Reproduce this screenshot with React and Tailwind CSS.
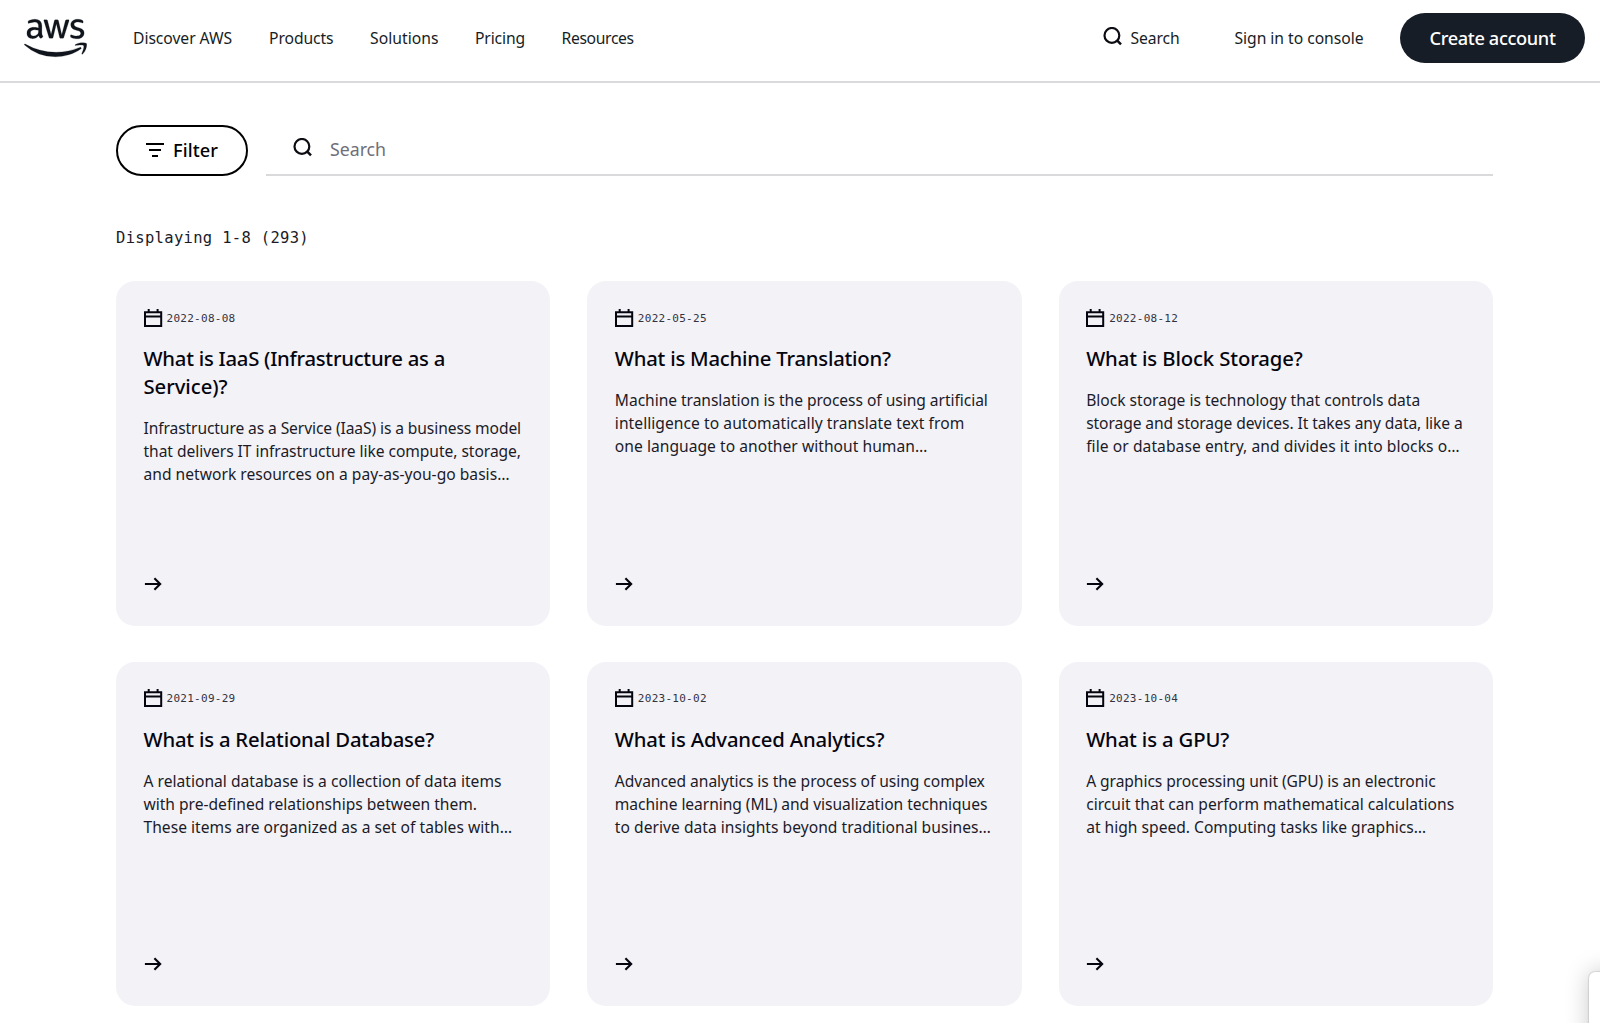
import { useLayoutEffect, useRef, useState } from "react";
import { FaAws } from "react-icons/fa6";

// A single line of text whose tracking is adjusted to fill a given width.
function Line({ text, width, className = "" }) {
  const ref = useRef(null);
  const [spacing, setSpacing] = useState(0);
  useLayoutEffect(() => {
    const natural = ref.current.getBoundingClientRect().width;
    setSpacing((width - natural) / text.length);
  }, [text, width]);
  return (
    <span className={`block w-max whitespace-nowrap ${className}`}>
      <span ref={ref} style={{ letterSpacing: `${spacing}px` }}>
        {text}
      </span>
    </span>
  );
}

function SearchIcon({ className = "" }) {
  return (
    <svg className={`h-[19px] w-[19px] ${className}`} viewBox="0 0 19 19" fill="none" stroke="#0c0c12" strokeWidth="2.2">
      <circle cx="8.9" cy="8.4" r="7.4" />
      <path d="M13.8 13.2 18 17.4" strokeWidth="2.5" />
    </svg>
  );
}

function FilterIcon() {
  return (
    <svg className="h-[18px] w-[18px]" viewBox="0 0 18 18" fill="none" stroke="#000" strokeWidth="2.1">
      <path d="M0 3h18M3 9h12M6 15h6" />
    </svg>
  );
}

function CalendarIcon() {
  return (
    <svg className="h-[19px] w-[19px]" viewBox="0 0 19 19" fill="none" stroke="#05050f" strokeWidth="2">
      <path d="M1 3.2h16.2v13.8H1zM1 7.6h16.2M4.7 0v3.4M13.6 0v3.4" />
    </svg>
  );
}

function ArrowIcon() {
  return (
    <svg className="h-[14px] w-[18px]" viewBox="0 0 18 14" fill="none" stroke="#05050f" strokeWidth="2.1">
      <path d="M.9 7h15.6M10.4 1.2 16.2 7l-5.8 5.8" />
    </svg>
  );
}

const nav = [
  ["Discover AWS", 99, "w-[136px]"],
  ["Products", 64.5, "w-[101px]"],
  ["Solutions", 68.5, "w-[105px]"],
  ["Pricing", 50, "w-[86.5px]"],
  ["Resources", 72.3, "w-[80px]"],
];

const cards = [
  {
    date: "2022-08-08",
    title: [["What is IaaS (Infrastructure as a", 301.5], ["Service)?", 84]],
    body: [
      ["Infrastructure as a Service (IaaS) is a business model", 377.5],
      ["that delivers IT infrastructure like compute, storage,", 377.5],
      ["and network resources on a pay-as-you-go basis…", 366],
    ],
  },
  {
    date: "2022-05-25",
    title: [["What is Machine Translation?", 276]],
    body: [
      ["Machine translation is the process of using artificial", 373],
      ["intelligence to automatically translate text from", 349.5],
      ["one language to another without human…", 312.5],
    ],
  },
  {
    date: "2022-08-12",
    title: [["What is Block Storage?", 216.5]],
    body: [
      ["Block storage is technology that controls data", 334],
      ["storage and storage devices. It takes any data, like a", 376.5],
      ["file or database entry, and divides it into blocks o…", 373.5],
    ],
  },
  {
    date: "2021-09-29",
    title: [["What is a Relational Database?", 290.5]],
    body: [
      ["A relational database is a collection of data items", 358],
      ["with pre-defined relationships between them.", 333.5],
      ["These items are organized as a set of tables with…", 368.5],
    ],
  },
  {
    date: "2023-10-02",
    title: [["What is Advanced Analytics?", 269.5]],
    body: [
      ["Advanced analytics is the process of using complex", 370],
      ["machine learning (ML) and visualization techniques", 372.5],
      ["to derive data insights beyond traditional busines…", 376],
    ],
  },
  {
    date: "2023-10-04",
    title: [["What is a GPU?", 143]],
    body: [
      ["A graphics processing unit (GPU) is an electronic", 349.5],
      ["circuit that can perform mathematical calculations", 368],
      ["at high speed. Computing tasks like graphics…", 340],
    ],
  },
];

function Card({ date, title, body }) {
  return (
    <article className="flex h-[344.5px] flex-col rounded-[19px] bg-[#f3f2f7] px-[27.5px] pt-[27.5px] pb-[35px]">
      <div className="flex h-[19px] items-center gap-[4px]">
        <CalendarIcon />
        <Line text={date} width={69} className="font-['DejaVu_Sans_Mono',monospace] text-[11px] leading-[19px] text-[#33333f]" />
      </div>
      <h2 className="mt-[17.6px] text-[20.3px] leading-[27.6px] font-medium text-[#05050f]">
        {title.map(([t, w]) => (
          <Line key={t} text={t} width={w} />
        ))}
      </h2>
      <p className="mt-[16.4px] text-[15.6px] leading-[23px] text-[#1b1b28]">
        {body.map(([t, w]) => (
          <Line key={t} text={t} width={w} />
        ))}
      </p>
      <div className="mt-auto">
        <ArrowIcon />
      </div>
    </article>
  );
}

export default function App() {
  return (
    <div className="h-[1023px] w-[1600px] overflow-hidden bg-white font-['Noto_Sans',sans-serif] text-[#161d26]">
      <header className="flex h-[83px] items-start border-b-2 border-[#dadadc] pr-[15px] pl-6">
        <FaAws className="mt-[13px] h-[50px] w-[63px] stroke-[#10141c] stroke-[2] text-[#10141c]" />
        <nav className="ml-[46px] flex pt-[26px] text-[15.7px] leading-[24px]">
          {nav.map(([t, w, box]) => (
            <a key={t} className={box}>
              <Line text={t} width={w} />
            </a>
          ))}
        </nav>
        <div className="ml-auto flex text-[15.7px] leading-[24px]">
          <div className="flex pt-[26px]">
            <SearchIcon className="mt-[0.5px]" />
            <Line text="Search" width={49} className="ml-[9px]" />
            <Line text="Sign in to console" width={129} className="ml-[55px]" />
          </div>
          <button className="mt-[12.5px] ml-[36.5px] flex h-[50.5px] w-[185px] items-center justify-center rounded-full bg-[#161d26] text-[18.2px] font-medium text-white">
            <Line text="Create account" width={126} />
          </button>
        </div>
      </header>

      <main className="mr-[107px] ml-[116px]">
        <div className="mt-[42px] flex h-[51px]">
          <button className="flex h-[50.5px] w-[131.5px] items-center rounded-full border-2 border-black pl-[28px] text-[18.2px] font-medium text-black">
            <FilterIcon />
            <Line text="Filter" width={45} className="mt-px ml-[9px]" />
          </button>
          <div className="ml-[18.5px] flex flex-1 border-b-2 border-[#dadadc] pl-[27px]">
            <SearchIcon className="mt-[12.5px]" />
            <Line text="Search" width={56} className="ml-[18px] text-[17.8px] leading-[49px] text-[#6f6f78]" />
          </div>
        </div>

        <Line
          text="Displaying 1-8 (293)"
          width={193}
          className="mt-[50px] font-['DejaVu_Sans_Mono',monospace] text-[15.5px] leading-[24px] text-[#1b1b28]"
        />

        <section className="mt-[31px] grid grid-cols-3 gap-x-[37px] gap-y-[36.3px]">
          {cards.map((c) => (
            <Card key={c.title[0][0]} {...c} />
          ))}
        </section>
      </main>

      <aside className="fixed right-[-40px] bottom-[-40px] h-[91px] w-[51.5px] rounded-[6px] bg-white shadow-[0_0_24px_rgba(0,0,0,0.22),0_0_2px_rgba(0,0,0,0.35)]" />
    </div>
  );
}
